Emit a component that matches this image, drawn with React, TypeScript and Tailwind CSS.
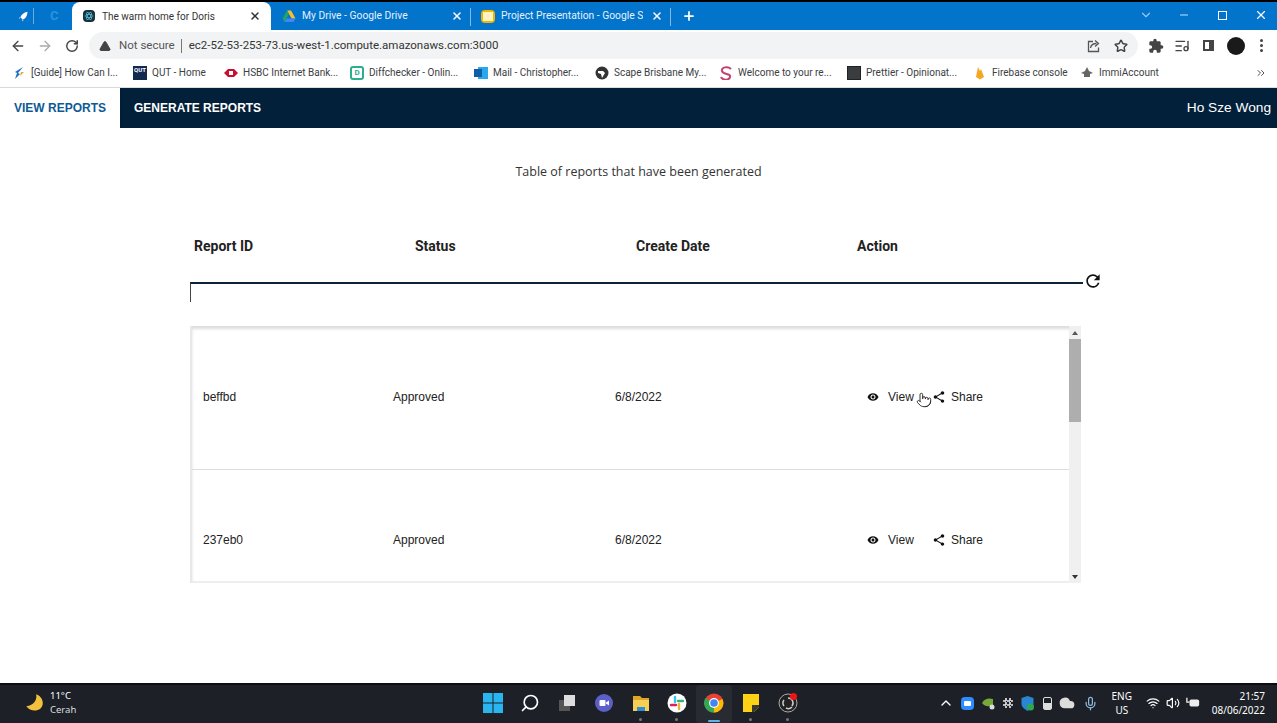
import { ArrowLeft, ArrowRight, RotateCw, Star, ListMusic, Pointer, X, Plus, ChevronDown, Minus, ChevronUp, Mic, Wifi, Volume2, Cloud, Search, TriangleAlert, ChevronsRight } from 'lucide-react';
import { MdVisibility, MdShare, MdRefresh, MdExtension } from 'react-icons/md';

const rows = [
  { id: 'beffbd', status: 'Approved', date: '6/8/2022', hover: true },
  { id: '237eb0', status: 'Approved', date: '6/8/2022', hover: false },
];

const bookmarks = [
  { label: '[Guide] How Can I...', cls: 'w-[121px]', icon: <svg viewBox="0 0 14 14" className="size-3.5"><path d="M11 1 6 7l2 1-5 5 2-6-2-1z" fill="#1e6fc0" /><path d="M9 6h3L8 10z" fill="#e8a33a" /></svg> },
  { label: 'QUT - Home', cls: 'w-[91px]', icon: <span className="size-3.5 bg-[#12294f] text-white text-[6px] leading-[8px] font-bold text-center">QUT</span> },
  { label: 'HSBC Internet Bank...', cls: 'w-[126px]', icon: <svg viewBox="0 0 14 10" className="w-3.5 h-2.5"><path d="M0 5 4 1h6l4 4-4 4H4z" fill="#c8102e" /><rect x="5" y="3" width="4" height="4" fill="#fff" /></svg> },
  { label: 'Diffchecker - Onlin...', cls: 'w-[124px]', icon: <span className="size-3.5 rounded-[3px] border-2 border-[#2bae8e] text-[#2bae8e] text-[8px] leading-[10px] font-bold text-center">D</span> },
  { label: 'Mail - Christopher...', cls: 'w-[121px]', icon: <svg viewBox="0 0 14 14" className="size-3.5"><rect x="4" y="1" width="10" height="12" fill="#28a8ea" /><rect x="0" y="3" width="8" height="8" fill="#0f5ea8" /></svg> },
  { label: 'Scape Brisbane My...', cls: 'w-[124px]', icon: <svg viewBox="0 0 14 14" className="size-3.5"><circle cx="7" cy="7" r="6.5" fill="#333" /><path d="M3 5h5l2 2-3 5-1-4-3-1z" fill="#fff" /></svg> },
  { label: 'Welcome to your re...', cls: 'w-[128px]', icon: <svg viewBox="0 0 14 14" className="size-3.5"><path d="M12 3C9 0 2 1 3 5s9 2 8 6-8 3-9 0" fill="none" stroke="#c2416f" strokeWidth="2" /></svg> },
  { label: 'Prettier - Opinionat...', cls: 'w-[126px]', icon: <span className="size-3.5 bg-[#3a3d40] border border-[#222]" /> },
  { label: 'Firebase console', cls: 'w-[107px]', icon: <svg viewBox="0 0 14 14" className="size-3.5"><path d="M3 11 5 1l2 4 1-2 3 8-4 2.5z" fill="#f5a623" /></svg> },
  { label: 'ImmiAccount', cls: 'w-[90px]', icon: <svg viewBox="0 0 14 14" className="size-3.5"><path d="M7 1 9 5l4 2-3 1v3H4V8L1 7l4-2z" fill="#666" /></svg> },
];

function Tab({ title, icon, cls }: { title: string; icon: React.ReactNode; cls: string }) {
  return (
    <div className={`flex items-center h-full text-[10.3px] text-white shrink-0 ${cls}`}>
      <span className="size-[14px] flex items-center justify-center mr-1.5 shrink-0">{icon}</span>
      <span className="overflow-hidden whitespace-nowrap flex-1 opacity-90 mr-2">{title}</span>
      <X className="size-3 shrink-0" strokeWidth={3} />
    </div>
  );
}

function ChromeBar() {
  return (
    <div className="font-['Roboto',sans-serif]">
      {/* tab strip */}
      <div className="h-[30px] bg-[#0274cc] border-t-2 border-black flex items-end">
        <div className="w-[72px] h-full flex items-center shrink-0">
          <svg viewBox="0 0 14 14" className="size-[11px] ml-[18px]"><path d="M12 1C7 2 4 5 3 8l3 3c3-1 6-4 6-10zM3 8l-2 1 1 1zM6 11l-1 2 2-1z" fill="#fff" /></svg>
          <span className="w-px h-4 bg-white/40 ml-[4px]" />
          <span className="ml-[16px] text-[#2b93dd] text-[13px] font-bold">C</span>
        </div>
        <div className="w-[199px] h-[28px] bg-white rounded-t-lg flex items-center pl-[11px] pr-2.5 text-[10px] text-[#333] shrink-0">
          <span className="size-3 bg-[#17303a] rounded-sm mr-[7px] flex items-center justify-center shrink-0">
            <svg viewBox="0 0 12 12" className="size-2.5"><g fill="none" stroke="#61dafb" strokeWidth=".7"><ellipse cx="6" cy="6" rx="5" ry="2" /><ellipse cx="6" cy="6" rx="5" ry="2" transform="rotate(60 6 6)" /><ellipse cx="6" cy="6" rx="5" ry="2" transform="rotate(120 6 6)" /></g></svg>
          </span>
          <span className="flex-1 truncate">The warm home for Doris</span>
          <X className="size-3 text-[#333]" strokeWidth={3} />
        </div>
        <Tab
          title="My Drive - Google Drive"
          cls="w-[199px] pl-[11px] pr-[7px]"
          icon={<svg viewBox="0 0 14 13" className="size-[14px]"><path d="M5 1h4l4.5 8h-4z" fill="#f6c02c" /><path d="M5 1 .5 9l2 3.5L7 4.5z" fill="#1fa463" /><path d="M2.500 12.500h9l2-3.500h-9z" fill="#4285f4" /></svg>}
        />
        <span className="w-px h-[18px] bg-white/50 mb-[4px] shrink-0" />
        <Tab
          title="Project Presentation - Google Slides"
          cls="w-[199px] pl-[10px] pr-[7px]"
          icon={<span className="w-3.5 h-[13px] rounded-sm bg-[#f4b400] border-2 border-[#f4b400] flex"><span className="flex-1 bg-[#fff3c4]" /></span>}
        />
        <span className="w-px h-[18px] bg-white/50 mb-[4px] shrink-0" />
        <Plus className="size-3.5 text-white ml-[11px] mb-[7px] shrink-0" strokeWidth={3} />
        <div className="flex-1 h-full flex items-center justify-end text-white pb-0.5">
          <ChevronDown className="size-3.5 opacity-60 mr-[25px]" />
          <Minus className="size-3 opacity-80 mr-[28px]" />
          <span className="size-[9px] border border-white mr-[27px]" />
          <X className="size-3.5 mr-[9px]" />
        </div>
      </div>

      {/* address bar */}
      <div className="h-[31px] bg-white flex items-center text-[#444]">
        <ArrowLeft className="size-4 ml-[10px]" />
        <ArrowRight className="size-4 ml-[11px] text-[#aaa]" />
        <RotateCw className="size-3.5 ml-[12px]" strokeWidth={2.5} />
        <div className="ml-[10px] w-[1049px] h-[27px] rounded-full bg-[#f1f3f4] flex items-center text-[11.5px]">
          <TriangleAlert className="size-3 ml-[10px] text-[#444] fill-[#444] stroke-[#444]" />
          <span className="ml-[8px] text-[#555]">Not secure</span>
          <span className="w-px h-3.5 bg-[#777] ml-[6px]" />
          <span className="ml-[7px] text-[#333]">ec2-52-53-253-73.us-west-1.compute.amazonaws.com:3000</span>
          <span className="flex-1" />
          <svg viewBox="0 0 14 14" className="size-3.5 mr-[13px]" fill="none" stroke="#555" strokeWidth="1.300"><path d="M6 2.500H1.500v10h10V8.500" /><path d="M3.500 9c.5-3 3-4.500 6-4.500M8 1.500l3.500 3L8 7.500" /></svg>
          <Star className="size-3.5 text-[#444] mr-[10px]" strokeWidth={2.5} />
        </div>
        <MdExtension className="size-4 ml-[10px] text-[#444]" />
        <ListMusic className="size-4 ml-[10px]" />
        <span className="w-[11px] h-[11px] border-2 border-[#444] border-r-[5px] ml-[13px]" />
        <span className="size-[18px] rounded-full bg-[#1a1a1a] ml-[13px]" />
        <span className="ml-[15px] flex flex-col gap-[2px]">
          <span className="size-[3px] rounded-full bg-[#444]" />
          <span className="size-[3px] rounded-full bg-[#444]" />
          <span className="size-[3px] rounded-full bg-[#444]" />
        </span>
      </div>

      {/* bookmarks */}
      <div className="h-[27px] bg-white flex items-center pl-[12px] pb-[3px] text-[10px] text-[#3c4043] border-b border-[#ddd]">
        {bookmarks.map(b => (
          <div key={b.label} className={`flex items-center gap-[5px] shrink-0 ${b.cls}`}>
            <span className="size-3.5 flex items-center justify-center shrink-0">{b.icon}</span>
            <span className="whitespace-nowrap">{b.label}</span>
          </div>
        ))}
        <span className="flex-1" />
        <ChevronsRight className="size-3 mr-[10px] text-[#555]" />
      </div>
    </div>
  );
}

function NavBar() {
  return (
    <div className="h-10 bg-[#03203a] flex items-center font-['Liberation_Sans',sans-serif] text-[12px] font-bold">
      <div className="w-[120px] h-full bg-white text-[#0d5a94] flex items-center pl-[14px] pb-px shadow-sm">VIEW REPORTS</div>
      <div className="pl-[14px] pb-px text-white">GENERATE REPORTS</div>
      <span className="flex-1" />
      <div className="pr-[6px] text-white font-normal text-[13.7px]">Ho Sze Wong</div>
    </div>
  );
}

function ReportRow({ id, status, date, hover }: { id: string; status: string; date: string; hover: boolean }) {
  return (
    <div className="relative h-[143px] grid grid-cols-[190px_222px_252px_1fr] items-center pl-[11px] pb-[2px] text-[12px] text-[#222] border-b border-[#ddd] shrink-0">
      <span>{id}</span>
      <span>{status}</span>
      <span>{date}</span>
      <div className="flex items-center">
        <MdVisibility className="size-3 text-[#111]" />
        <span className="ml-[9px] w-[45px]">View</span>
        <MdShare className="size-3.5 text-[#111] -ml-px" />
        <span className="ml-[5px]">Share</span>
      </div>
      {hover && <Pointer className="absolute left-[724px] top-[65px] size-4 text-[#333] bg-white/70" strokeWidth={1.5} />}
    </div>
  );
}

function ReportsPage() {
  return (
    <div className="h-[555px] bg-white font-['Liberation_Sans',sans-serif] flex flex-col">
      <p className="mt-[34px] h-[20px] text-center font-['Open_Sans',sans-serif] text-[12.5px] leading-[20px] text-[#333]">
        Table of reports that have been generated
      </p>
      <div className="ml-[190px] w-[913px] mt-[54px]">
        <div className="grid grid-cols-[221px_221px_221px_1fr] pl-1 h-5 items-center text-[14px] font-bold text-[#222] font-['Roboto',sans-serif]">
          <span>Report ID</span>
          <span>Status</span>
          <span>Create Date</span>
          <span>Action</span>
        </div>
        <div className="flex items-start mt-[18px]">
          <div className="w-[893px] h-[20px] shrink-0 border-t-2 border-t-[#0c2238] border-l border-l-[#444] mt-[8px]" />
          <MdRefresh className="size-5 text-[#111] -mt-[3px]" />
        </div>
        <div className="mt-[24px] w-[891px] h-[257px] flex border-l-2 border-[#e8e8e8] shadow-[inset_0_3px_3px_#ddd]">
          <div className="flex-1 h-full overflow-hidden flex flex-col pt-px border-b-2 border-[#eee]">
            {rows.map(r => <ReportRow key={r.id} {...r} />)}
          </div>
          <div className="w-3 h-full bg-[#f0f0f0] flex flex-col items-center">
            <span className="h-[13px] flex items-center"><span className="border-x-[3px] border-x-transparent border-b-[4px] border-b-[#555]" /></span>
            <span className="w-full h-[83px] bg-[#aeaeae] shrink-0" />
            <span className="flex-1" />
            <span className="h-[13px] flex items-center"><span className="border-x-[3px] border-x-transparent border-t-[4px] border-t-[#333]" /></span>
          </div>
        </div>
      </div>
    </div>
  );
}

function TaskIcon({ children, dot, active }: { children: React.ReactNode; dot?: boolean; active?: boolean }) {
  return (
    <span className="relative size-5 flex items-center justify-center">
      {active && <span className="absolute -inset-x-2 -top-2 -bottom-2.5 bg-white/5 rounded" />}
      <span className="relative size-5">{children}</span>
      {dot && <span className="absolute -bottom-[8px] left-[8px] size-[3px] rounded-full bg-[#777]" />}
      {active && <span className="absolute -bottom-[9px] left-[4px] w-3 h-[2px] rounded-full bg-[#5fb3e8]" />}
    </span>
  );
}

function Taskbar() {
  return (
    <div className="h-10 bg-[#1d2127] border-t-2 border-[#0c0d10] flex items-center pb-[2px] text-white font-['Noto_Sans',sans-serif] relative">
      <svg viewBox="0 0 20 20" className="size-[22px] ml-[23px] shrink-0"><path d="M12 2c1 5-2 10-9 11 4 6 15 5 15-3 0-4-3-7-6-8z" fill="#f2c23e" /></svg>
      <div className="ml-[5px] text-[9.5px] leading-[14px]">
        <div>11°C</div>
        <div className="text-[#ddd]">Cerah</div>
      </div>
      <span className="flex-1" />
      {/* pinned apps */}
      <div className="absolute left-[483px] top-0 h-full pb-[2px] flex items-center gap-[16.9px]">
        <TaskIcon><svg viewBox="0 0 20 20" className="size-5"><g fill="#29b6f0"><rect x="0" y="0" width="9.500" height="9.500" /><rect x="10.500" y="0" width="9.500" height="9.500" /><rect x="0" y="10.500" width="9.500" height="9.500" /><rect x="10.500" y="10.500" width="9.500" height="9.500" /></g></svg></TaskIcon>
        <TaskIcon><Search className="size-5 -scale-x-100" strokeWidth={2} /></TaskIcon>
        <TaskIcon><svg viewBox="0 0 20 20" className="size-5"><rect x="2" y="7" width="11" height="11" fill="#555" /><rect x="7" y="2" width="11" height="11" fill="#ddd" /></svg></TaskIcon>
        <TaskIcon><svg viewBox="0 0 20 20" className="size-5"><circle cx="10" cy="10" r="9" fill="#5b5fc7" /><rect x="5.500" y="7" width="6" height="6" rx="1" fill="#fff" /><path d="m12 9.500 3-2v5l-3-2z" fill="#fff" /></svg></TaskIcon>
        <TaskIcon dot><svg viewBox="0 0 20 20" className="size-5"><path d="M2 3h7l2 2h7v3H2z" fill="#e0a526" /><rect x="2" y="7" width="16" height="11" fill="#f8cf55" /><rect x="6" y="14" width="8" height="4" fill="#2a8fd8" /></svg></TaskIcon>
        <TaskIcon dot><svg viewBox="0 0 20 20" className="size-5"><circle cx="10" cy="10" r="9.500" fill="#fff" /><g strokeWidth="2.400" strokeLinecap="round"><path d="M8 4v5" stroke="#36c5f0" /><path d="M16 8h-5" stroke="#2eb67d" /><path d="M12 16v-5" stroke="#ecb22e" /><path d="M4 12h5" stroke="#e01e5a" /></g></svg></TaskIcon>
        <TaskIcon active><svg viewBox="0 0 20 20" className="size-5"><circle cx="10" cy="10" r="9.500" fill="#ea4335" /><path d="M10 10 18.500 6A9.500 9.500 0 0 1 10 19.500z" fill="#fbbc05" /><path d="M10 10 10 19.500A9.500 9.500 0 0 1 1.500 5z" fill="#34a853" /><circle cx="10" cy="10" r="5" fill="#fff" /><circle cx="10" cy="10" r="3.800" fill="#4285f4" /></svg></TaskIcon>
        <TaskIcon dot><svg viewBox="0 0 20 20" className="size-5"><path d="M2 1h16v13l-5 5H2z" fill="#fcd116" /><path d="M18 12v2l-5 5h-2v-7z" fill="#3b3a2e" /></svg></TaskIcon>
        <TaskIcon dot><svg viewBox="0 0 20 20" className="size-5"><circle cx="10" cy="10" r="9" fill="#222" stroke="#aaa" /><path d="M10 5a5 5 0 0 1 4 8M6 13a5 5 0 0 1 0-6M8 15a5 5 0 0 0 6-1" fill="none" stroke="#ccc" strokeWidth="1.500" /><circle cx="15.500" cy="3.500" r="3.500" fill="#f01414" /></svg></TaskIcon>
      </div>
      {/* tray */}
      <ChevronUp className="size-4 shrink-0" />
      <span className="size-[13px] rounded-[4px] bg-[#2d8cff] ml-[7px] flex items-center justify-center"><span className="w-[7px] h-[5px] rounded-[1px] bg-white" /></span>
      <svg viewBox="0 0 14 14" className="size-3.5 ml-[7px]"><path d="M1 7c3-5 7-5 11-4v6c-4 2-8 2-11-2z" fill="#76a83a" /><circle cx="11" cy="11" r="2.500" fill="#ddd" /></svg>
      <svg viewBox="0 0 12 12" className="size-3 ml-[7px]"><path d="M4 1v10M8 1v10M1 4h10M1 8h10" stroke="#eee" strokeWidth="1.600" strokeDasharray="3 1" /></svg>
      <svg viewBox="0 0 14 15" className="size-[15px] ml-[6px]"><path d="M7 0 13 2v6c0 3-3 5-6 7-3-2-6-4-6-7V2z" fill="#2a86d5" /><circle cx="10" cy="11" r="3.500" fill="#2fa84f" /></svg>
      <span className="w-[9px] h-[13px] border border-[#ddd] rounded-[2px] ml-[8px] flex items-end"><span className="w-full h-[6px] bg-[#ddd]" /></span>
      <Cloud className="size-4 ml-[7px] fill-[#ddd] stroke-[#ddd]" />
      <Mic className="size-[15px] ml-[8px] text-[#8fb8dc]" />
      <div className="ml-[7px] w-[34px] text-center text-[10px] leading-[14px]">ENG<br />US</div>
      <Wifi className="size-3.5 ml-[7px]" />
      <Volume2 className="size-3.5 ml-[6px]" />
      <svg viewBox="0 0 16 14" className="size-3.5 ml-[6px]"><rect x="4" y="3" width="11" height="8" rx="2" fill="#eee" /><path d="M1 1v5h3" stroke="#eee" fill="none" strokeWidth="1.500" /></svg>
      <div className="ml-[12px] mr-[12px] text-right text-[10px] leading-[14px]">
        <div>21:57</div>
        <div>08/06/2022</div>
      </div>
    </div>
  );
}

export default function App() {
  return (
    <div className="w-[1277px] h-[723px] overflow-hidden flex flex-col bg-white">
      <ChromeBar />
      <NavBar />
      <ReportsPage />
      <Taskbar />
    </div>
  );
}
